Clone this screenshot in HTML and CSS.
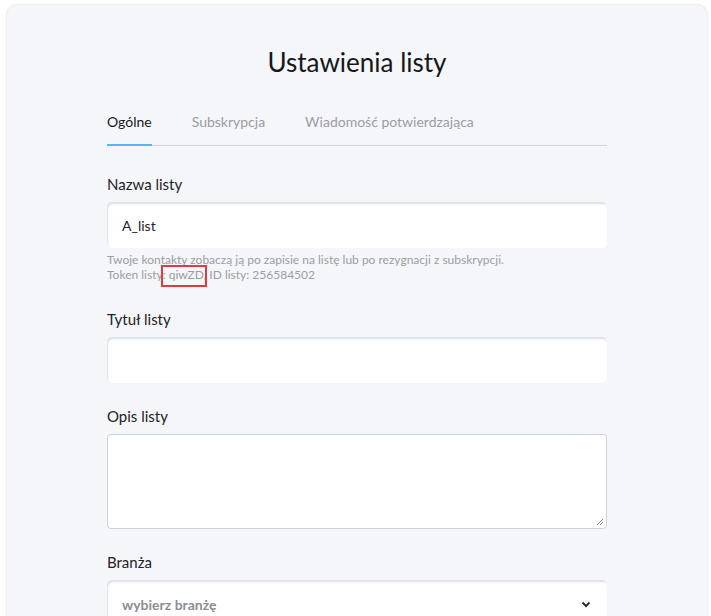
FILE: index.html
```html
<!DOCTYPE html>
<html lang="pl">
<head>
<meta charset="utf-8">
<title>Ustawienia listy</title>
<link rel="stylesheet" href="styles.css">
</head>
<body>
<div class="card">
  <div class="content">
    <h1 class="title">Ustawienia listy</h1>
    <nav class="tabs">
      <span class="tab active">Ogólne</span>
      <span class="tab">Subskrypcja</span>
      <span class="tab">Wiadomość potwierdzająca</span>
    </nav>

    <div class="field first">
      <label class="label">Nazwa listy</label>
      <div class="input">A_list</div>
      <div class="help">
        <div>Twoje kontakty zobaczą ją po zapisie na listę lub po rezygnacji z subskrypcji.</div>
        <div class="token">Token listy: qiwZD, ID listy: 256584502<span class="mark"></span></div>
      </div>
    </div>

    <div class="field second">
      <label class="label">Tytuł listy</label>
      <div class="input"></div>
    </div>

    <div class="field">
      <label class="label">Opis listy</label>
      <div class="textarea">
        <svg class="grip" width="8" height="8" viewBox="0 0 8 8"><path d="M7 1 L1 7 M7 4 L4 7" stroke="#777" stroke-width="0.9" fill="none"/></svg>
      </div>
    </div>

    <div class="field">
      <label class="label">Branża</label>
      <div class="input select">
        <span class="placeholder">wybierz branżę</span>
        <svg class="chev" width="10" height="7" viewBox="0 0 10 7"><path d="M1.5 1.5 L5 5 L8.5 1.5" stroke="#2a2f3a" stroke-width="2" fill="none"/></svg>
      </div>
    </div>
  </div>
</div>
</body>
</html>
```

FILE: styles.css
```css
html, body {
  margin: 0;
  padding: 0;
  background: #ffffff;
  font-family: "Lato", "Noto Sans", sans-serif;
  color: #1f2126;
}
body {
  height: 616px;
  overflow: hidden;
}
.card {
  margin: 5px 0 0 7px;
  width: 700px;
  height: 640px;
  background: #f5f6fa;
  border-radius: 10px;
  box-shadow: 0 0 3px rgba(0, 0, 0, 0.18);
}
.content {
  width: 500px;
  margin: 0 auto;
  padding-top: 40px;
}
.title {
  margin: 0;
  text-align: center;
  font-weight: 400;
  font-size: 26px;
  line-height: 34px;
  color: #15171c;
}
.tabs {
  margin-top: 34px;
  display: flex;
  gap: 40px;
  border-bottom: 1px solid #d2d4d9;
}
.tab {
  font-size: 14px;
  line-height: 18px;
  padding-bottom: 13px;
  color: #9a9ca3;
  margin-bottom: -1px;
  border-bottom: 2px solid transparent;
}
.tab.active {
  color: #15171c;
  border-bottom-color: #56b4f4;
}
.field {
  margin-top: 23px;
}
.field.first {
  margin-top: 28px;
}
.field.second {
  margin-top: 27px;
}
.label {
  display: block;
  font-size: 15px;
  line-height: 20px;
  margin-bottom: 8px;
  color: #1f2126;
}
.input {
  height: 46px;
  box-sizing: border-box;
  background: #ffffff;
  border-radius: 5px;
  box-shadow: inset 1px 2px 2px rgba(40, 60, 90, 0.16);
  display: flex;
  align-items: center;
  padding: 0 15px;
  font-size: 14px;
  color: #1f2126;
}
.help {
  margin-top: 4px;
  font-size: 12px;
  line-height: 15px;
  color: #9b9da3;
}
.token {
  position: relative;
}
.mark {
  position: absolute;
  left: 54px;
  top: -2px;
  width: 42px;
  height: 18px;
  border: 2px solid #e23b3b;
}
.textarea {
  position: relative;
  height: 95px;
  box-sizing: border-box;
  background: #ffffff;
  border: 1px solid #cfd1d6;
  border-radius: 4px;
}
.grip {
  position: absolute;
  right: 2px;
  bottom: 2px;
}
.select {
  justify-content: space-between;
  height: 48px;
}
.placeholder {
  font-weight: 700;
  color: #8b8d93;
  font-size: 14px;
}
.chev {
  margin-right: 1px;
}
```
